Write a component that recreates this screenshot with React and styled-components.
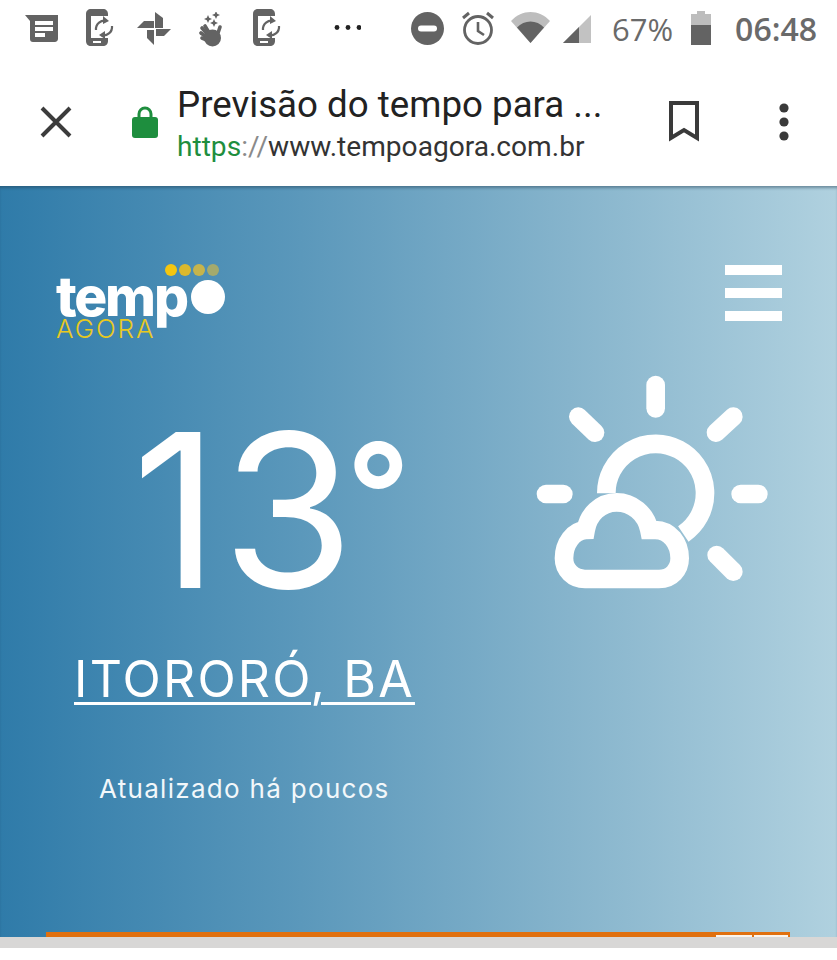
import React from "react";
import styled, { createGlobalStyle } from "styled-components";

const Global = createGlobalStyle`
	html, body {
		margin: 0;
		padding: 0;
		background: #ffffff;
	}
	* {
		box-sizing: border-box;
	}
`;

const Page = styled.div`
	width: 837px;
	height: 960px;
	overflow: hidden;
	display: flex;
	flex-direction: column;
	background: #ffffff;
	font-family: Roboto, "Liberation Sans", sans-serif;
`;

const StatusBar = styled.div`
	height: 65px;
	display: flex;
	align-items: flex-start;
	padding: 0 19px 0 25px;
`;

const StatusIcon = styled.svg`
	flex: none;
	display: block;
	margin-left: ${(p) => p.$ml || 0}px;
	margin-top: ${(p) => p.$mt || 0}px;
`;

const StatusText = styled.span`
	flex: none;
	margin-left: ${(p) => p.$ml}px;
	margin-top: 11px;
	font-family: "Open Sans", sans-serif;
	font-size: ${(p) => p.$size}px;
	font-weight: ${(p) => p.$weight};
	line-height: 36px;
	color: #6a6a6a;
`;

const AddressBar = styled.div`
	height: 121px;
	display: flex;
	align-items: center;
	padding: 0 0 8px 40px;
`;

const CloseIcon = styled.svg`
	flex: none;
`;

const LockIcon = styled.svg`
	flex: none;
	margin-left: 60px;
`;

const BookmarkIcon = styled.svg`
	flex: none;
	margin-left: 35px;
`;

const MoreIcon = styled.svg`
	flex: none;
	margin-left: 78px;
`;

const TitleBlock = styled.div`
	width: 456px;
	margin-left: 19px;
	margin-top: 4px;
	display: flex;
	flex-direction: column;
	gap: 5px;
`;

const PageTitle = styled.div`
	font-size: 36.7px;
	line-height: 42px;
	color: #222222;
	white-space: nowrap;
`;

const PageUrl = styled.div`
	font-size: 28.1px;
	line-height: 32px;
	color: #333333;
	white-space: nowrap;
`;

const Scheme = styled.span`
	color: #1e8e3e;
`;

const Slashes = styled.span`
	color: #8a8a8a;
`;

const Hero = styled.div`
	height: 751px;
	flex: none;
	display: flex;
	flex-direction: column;
	background: linear-gradient(90deg, #2f7ba9 0%, #5b98bb 36%, #86b4cc 68%, #b0d1df 100%);
	box-shadow: inset 0 3px 3px -1px rgba(30, 60, 80, 0.45);
`;

const HeroTop = styled.div`
	display: flex;
	justify-content: space-between;
	align-items: flex-start;
	padding: 78px 55px 0 56px;
`;

const Logo = styled.div`
	width: 170px;
	height: 76px;
	display: flex;
	flex-direction: column;
	color: #ffffff;
`;

const LogoDots = styled.div`
	display: flex;
	justify-content: flex-end;
	gap: 2px;
	padding-right: 7px;
`;

const LogoDot = styled.span`
	width: 12px;
	height: 12px;
	border-radius: 50%;
	background: ${(p) => p.$color};
`;

const LogoWord = styled.div`
	display: flex;
	align-items: center;
	height: 42px;
	margin-top: -1px;
	font-family: Inter, sans-serif;
	font-size: 55px;
	font-weight: 800;
	letter-spacing: -2.2px;
	line-height: 42px;
`;

const LogoDisc = styled.span`
	width: 34px;
	height: 34px;
	margin-left: 4px;
	margin-top: 2px;
	border-radius: 50%;
	background: #ffffff;
`;

const LogoSub = styled.div`
	margin-top: 1px;
	font-family: Inter, sans-serif;
	font-size: 26px;
	font-weight: 300;
	line-height: 22px;
	letter-spacing: 1.9px;
	color: #e9c91f;
`;

const Burger = styled.div`
	width: 57px;
	display: flex;
	flex-direction: column;
	gap: 13px;
	margin-top: 1px;
`;

const BurgerBar = styled.span`
	height: 10px;
	background: #ffffff;
`;

const HeroMain = styled.div`
	display: flex;
	justify-content: space-between;
	align-items: flex-start;
	padding: 0 0 0 74px;
`;

const Reading = styled.div`
	display: flex;
	flex-direction: column;
	align-items: flex-start;
`;

const Temperature = styled.div`
	margin: 71px 0 0 58px;
	display: flex;
	align-items: flex-start;
	font-family: Inter, sans-serif;
	font-size: 214px;
	font-weight: 400;
	line-height: 200px;
	letter-spacing: -8px;
	color: #ffffff;
`;

const Digit = styled.span`
	margin-right: ${(p) => p.$mr || 0}px;
`;

const Degree = styled.span`
	font-size: 140px;
	font-weight: 600;
	line-height: 140px;
	letter-spacing: 0;
	margin: 12px 0 0 0;
`;

const City = styled.a`
	margin-top: 38px;
	font-family: Inter, sans-serif;
	font-size: 50px;
	font-weight: 400;
	line-height: 60px;
	letter-spacing: 2.2px;
	color: #ffffff;
	text-decoration: underline;
	text-decoration-thickness: 3px;
	text-underline-offset: 5px;
`;

const Updated = styled.div`
	margin: 64px 0 0 25px;
	font-family: Inter, sans-serif;
	font-size: 26px;
	font-weight: 400;
	line-height: 32px;
	letter-spacing: 1.3px;
	color: #f2f7fa;
`;

const WeatherIcon = styled.svg`
	margin: 20px 47px 0 0;
	flex: none;
`;

const OrangeBar = styled.div`
	margin: auto 47px 0 46px;
	height: 5px;
	display: flex;
	justify-content: flex-end;
	background: #e0700f;
`;

const BarTab = styled.span`
	width: ${(p) => p.$w}px;
	margin-right: ${(p) => p.$mr}px;
	margin-top: 3px;
	background: #fbf4ec;
`;

const GreyStrip = styled.div`
	height: 11px;
	flex: none;
	background: #d8d7d6;
`;

const Grey = "#636363";

function PhoneSync({ ml }) {
	return (
		<StatusIcon $ml={ml} $mt={9} width="28" height="37" viewBox="0 0 28 37">
			<path d="M5 0H17C20 0 22 2 22 5V7H5V29H22V32C22 35 20 37 17 37H5C2 37 0 35 0 32V5C0 2 2 0 5 0Z" fill={Grey} />
			<rect x="7" y="32" width="8" height="2" fill="#fff" />
			<path d="M10 21A8.500 8.500 0 0 1 21 12" fill="none" stroke={Grey} strokeWidth="2.2" />
			<path d="M26 17A8.500 8.500 0 0 1 15 26" fill="none" stroke={Grey} strokeWidth="2.2" />
			<path d="M17 7L23 12L17 15Z" fill={Grey} />
			<path d="M19 22L13 26L19 30Z" fill={Grey} />
		</StatusIcon>
	);
}

function StatusIcons() {
	return (
		<StatusBar>
			<StatusIcon $mt={15} width="33" height="27" viewBox="0 0 33 27">
				<path d="M0 0H33V24C33 26 31 27 30 27H8C6 27 5 26 5 24V6Z" fill={Grey} />
				<rect x="10" y="6" width="18" height="4" fill="#fff" />
				<rect x="10" y="12" width="18" height="4" fill="#fff" />
				<rect x="10" y="18" width="10" height="4" fill="#fff" />
			</StatusIcon>
			<PhoneSync ml={28} />
			<StatusIcon $ml={23} $mt={11} width="34" height="34" viewBox="0 0 34 34">
				<path d="M18 1L26 7V17H18Z" fill={Grey} />
				<path d="M19 18H34L27 25H19Z" fill={Grey} />
				<path d="M10 19H17V34L10 27Z" fill={Grey} />
				<path d="M0 17L7 10H17V17Z" fill={Grey} />
			</StatusIcon>
			<StatusIcon $ml={28} $mt={12} width="24" height="35" viewBox="0 0 24 35">
				<path d="M17 -1L18.200 1.800L21 3L18.200 4.200L17 7L15.800 4.200L13 3L15.800 1.800Z" fill={Grey} />
				<path d="M9 3L10.200 5.800L13 7L10.200 8.200L9 11L7.800 8.200L5 7L7.800 5.800Z" fill={Grey} />
				<path d="M15 7L16.200 9.800L19 11L16.200 12.200L15 15L13.800 12.200L11 11L13.800 9.800Z" fill={Grey} />
				<g fill="none" stroke={Grey} strokeWidth="3.600" strokeLinecap="round">
					<path d="M12 24L6 14" />
					<path d="M11 25L3 16" />
					<path d="M10 27L2 21" />
					<path d="M10 29L3 26" />
					<path d="M18 24L21 15" />
				</g>
				<circle cx="13.500" cy="26" r="8.500" fill={Grey} />
			</StatusIcon>
			<PhoneSync ml={30} />
			<StatusIcon $ml={53} $mt={24} width="27" height="7" viewBox="0 0 27 7">
				<circle cx="3" cy="3.500" r="2.400" fill="#222" />
				<circle cx="14" cy="3.500" r="2.400" fill="#222" />
				<circle cx="25" cy="3.500" r="2.400" fill="#222" />
			</StatusIcon>
			<StatusIcon $ml={50} $mt={12} width="33" height="33" viewBox="0 0 33 33">
				<circle cx="16.500" cy="16.500" r="16.500" fill={Grey} />
				<rect x="7" y="13.500" width="19" height="6" rx="3" fill="#fff" />
			</StatusIcon>
			<StatusIcon $ml={18} $mt={11} width="32" height="34" viewBox="0 0 32 34">
				<circle cx="16" cy="19" r="13.500" fill="none" stroke={Grey} strokeWidth="2.800" />
				<path d="M16 11V20L22 24" fill="none" stroke={Grey} strokeWidth="2.600" />
				<path d="M1 7L7 2M31 7L25 2" fill="none" stroke={Grey} strokeWidth="3" />
			</StatusIcon>
			<StatusIcon $ml={17} $mt={12} width="39" height="31" viewBox="0 0 39 31">
				<path d="M0 9C11 -3 28 -3 39 9L19.500 31Z" fill="#bdbdbd" />
				<path d="M6 15.500C13 7.500 26 7.500 33 15.500L19.500 31Z" fill={Grey} />
			</StatusIcon>
			<StatusIcon $ml={13} $mt={15} width="28" height="28" viewBox="0 0 28 28">
				<path d="M28 0V28H0Z" fill="#c2c2c2" />
				<path d="M16 12V28H0Z" fill={Grey} />
			</StatusIcon>
			<StatusText $ml={21} $size={31} $weight={400}>67%</StatusText>
			<StatusIcon $ml={18} $mt={11} width="20" height="34" viewBox="0 0 20 34">
				<path d="M6 0H14V3H20V14H0V3H6Z" fill="#bdbdbd" />
				<rect y="14" width="20" height="20" fill={Grey} />
			</StatusIcon>
			<StatusText $ml={24} $size={32} $weight={600}>06:48</StatusText>
		</StatusBar>
	);
}

function Address() {
	return (
		<AddressBar>
			<CloseIcon width="32" height="32" viewBox="0 0 32 32">
				<path d="M2 2L30 30M30 2L2 30" stroke="#3c3c3c" strokeWidth="4" fill="none" />
			</CloseIcon>
			<LockIcon width="26" height="32" viewBox="0 0 26 32">
				<path d="M7 13V8A6 6 0 0 1 19 8V13" stroke="#1e8e3e" strokeWidth="3" fill="none" />
				<rect x="0" y="11" width="26" height="21" rx="3" fill="#1e8e3e" />
			</LockIcon>
			<TitleBlock>
				<PageTitle>Previsão do tempo para ...</PageTitle>
				<PageUrl>
					<Scheme>https</Scheme>
					<Slashes>://</Slashes>
					www.tempoagora.com.br
				</PageUrl>
			</TitleBlock>
			<BookmarkIcon width="32" height="41" viewBox="0 0 32 41">
				<path d="M3 2H29V37L16 29L3 37Z" stroke="#3a3a3a" strokeWidth="4" fill="none" />
			</BookmarkIcon>
			<MoreIcon width="12" height="38" viewBox="0 0 12 38">
				<circle cx="6" cy="5" r="4.600" fill="#3a3a3a" />
				<circle cx="6" cy="19" r="4.600" fill="#3a3a3a" />
				<circle cx="6" cy="33" r="4.600" fill="#3a3a3a" />
			</MoreIcon>
		</AddressBar>
	);
}

function SunCloud() {
	return (
		<WeatherIcon width="270" height="240" viewBox="0 0 810 720">
			<g fill="none" stroke="#ffffff" strokeWidth="56" strokeLinecap="round">
				<path d="M407 75V145" />
				<path d="M78 402H130" />
				<path d="M662 402H715" />
				<path d="M175 170L225 218" />
				<path d="M640 170L588 218" />
				<path d="M590 585L640 635" />
				<path d="M259 400A148 148 0 1 1 490 522" strokeLinecap="butt" />
				<path d="M195 657H417C455 657 479 628 479 595C479 550 450 510 405 510H388C378 460 335 427 290 427C240 427 205 465 197 510C160 512 132 550 132 595C132 630 160 657 195 657Z" />
			</g>
		</WeatherIcon>
	);
}

function App() {
	return (
		<Page>
			<Global />
			<StatusIcons />
			<Address />
			<Hero>
				<HeroTop>
					<Logo>
						<LogoDots>
							<LogoDot $color="#f5c60f" />
							<LogoDot $color="#dcb92e" />
							<LogoDot $color="#c6b44c" />
							<LogoDot $color="#a4aa6c" />
						</LogoDots>
						<LogoWord>
							temp
							<LogoDisc />
						</LogoWord>
						<LogoSub>AGORA</LogoSub>
					</Logo>
					<Burger>
						<BurgerBar />
						<BurgerBar />
						<BurgerBar />
					</Burger>
				</HeroTop>
				<HeroMain>
					<Reading>
						<Temperature>
							<Digit $mr={11}>1</Digit>
							<Digit>3</Digit>
							<Degree>°</Degree>
						</Temperature>
						<City>ITORORÓ, BA</City>
						<Updated>Atualizado há poucos</Updated>
					</Reading>
					<SunCloud />
				</HeroMain>
				<OrangeBar>
					<BarTab $w={36} $mr={2} />
					<BarTab $w={34} $mr={2} />
				</OrangeBar>
			</Hero>
			<GreyStrip />
		</Page>
	);
}

export default App;
